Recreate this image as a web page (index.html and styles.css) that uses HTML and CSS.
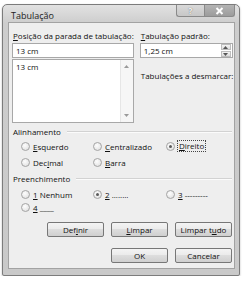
FILE: index.html
```html
<!DOCTYPE html>
<html>
<head>
<meta charset="utf-8">
<link rel="stylesheet" href="styles.css">
</head>
<body>
<div class="window">
  <div class="titlebar">
    <span class="title">Tabulação</span>
    <div class="caps">
      <span class="cap help">?</span>
      <span class="cap close"><svg width="9" height="8" viewBox="0 0 9 8"><path d="M1.5 1 L7.5 7 M7.5 1 L1.5 7" stroke="#fff" stroke-width="2"/></svg></span>
    </div>
  </div>
  <div class="client">
    <div class="top">
      <div class="col-left">
        <div class="label"><u>P</u>osição da parada de tabulação:</div>
        <div class="field">13 cm</div>
        <div class="listbox">
          <div class="item">13 cm</div>
          <div class="scroll">
            <svg width="5" height="3" viewBox="0 0 5 3"><path d="M0 3 L2.5 0 L5 3Z" fill="#9a9a9a"/></svg>
            <svg width="5" height="3" viewBox="0 0 5 3"><path d="M0 0 L2.5 3 L5 0Z" fill="#9a9a9a"/></svg>
          </div>
        </div>
      </div>
      <div class="col-right">
        <div class="label"><u>T</u>abulação padrão:</div>
        <div class="field spin">
          <span>1,25 cm</span>
          <div class="spinbtns">
            <span class="sb"><svg width="5" height="3" viewBox="0 0 5 3"><path d="M0 3 L2.5 0 L5 3Z" fill="#555"/></svg></span>
            <span class="sb"><svg width="5" height="3" viewBox="0 0 5 3"><path d="M0 0 L2.5 3 L5 0Z" fill="#555"/></svg></span>
          </div>
        </div>
        <div class="label clear">Tabulações a desmarcar:</div>
      </div>
    </div>

    <div class="group"><span>Alinhamento</span><i class="rule"></i></div>
    <div class="radios align">
      <label class="radio"><span class="dot"></span><span><u>E</u>squerdo</span></label>
      <label class="radio"><span class="dot"></span><span><u>C</u>entralizado</span></label>
      <label class="radio"><span class="dot on"></span><span class="focus"><u>D</u>ireito</span></label>
      <label class="radio"><span class="dot"></span><span>Dec<u>i</u>mal</span></label>
      <label class="radio"><span class="dot"></span><span><u>B</u>arra</span></label>
    </div>

    <div class="group"><span>Preenchimento</span><i class="rule"></i></div>
    <div class="radios fill">
      <label class="radio"><span class="dot"></span><span><u>1</u> Nenhum</span></label>
      <label class="radio"><span class="dot on"></span><span><u>2</u> ........</span></label>
      <label class="radio"><span class="dot"></span><span><u>3</u> ---------</span></label>
      <label class="radio"><span class="dot"></span><span><u>4</u> ____</span></label>
    </div>

    <div class="buttons first">
      <span class="btn">Def<u>i</u>nir</span>
      <span class="btn"><u>L</u>impar</span>
      <span class="btn">Limpar t<u>u</u>do</span>
    </div>
    <div class="buttons">
      <span class="btn">OK</span>
      <span class="btn">Cancelar</span>
    </div>
  </div>
</div>
</body>
</html>
```

FILE: styles.css
```css
html, body {
  margin: 0;
  padding: 0;
  background: #ffffff;
}
body {
  font-family: "Open Sans", "Noto Sans", sans-serif;
  font-size: 8px;
  color: #111;
}
u { text-decoration-thickness: 1px; text-underline-offset: 1px; }

.window {
  margin: 4px 0 0 2px;
  width: 238px;
  height: 272px;
  box-sizing: border-box;
  border: 1px solid #7c7c7c;
  border-radius: 5px 5px 2px 2px;
  background: linear-gradient(#e2e2e2, #cdcdcd 18px, #c9c9c9);
  padding: 0 4px 6px 5px;
  box-shadow: 0 1px 2px rgba(0,0,0,0.3);
}

.titlebar {
  height: 17px;
  display: flex;
  justify-content: space-between;
  align-items: flex-start;
}
.title {
  margin: 5px 0 0 3px;
  font-size: 9px;
  line-height: 11px;
  color: #222;
}
.caps {
  display: flex;
}
.cap {
  height: 12px;
  display: flex;
  align-items: center;
  justify-content: center;
  box-sizing: border-box;
  border: 1px solid #8a8a8a;
  border-top: none;
}
.help {
  width: 28px;
  border-radius: 0 0 0 3px;
  background: linear-gradient(#d9d9d9, #c7c7c7);
  color: #f4f4f4;
  font-weight: bold;
  font-size: 9px;
  text-shadow: 0 0 1px #555;
  border-right: none;
}
.close {
  width: 31px;
  border-radius: 0 0 3px 0;
  background: linear-gradient(#b4b4b4, #9c9c9c);
}

.client {
  height: 247px;
  box-sizing: border-box;
  border: 1px solid #a2a2a2;
  background: #eeeeee;
  padding: 7px 2px 0 3px;
}

.top {
  display: flex;
  gap: 6px;
}
.col-left { width: 122px; }
.col-right { width: 93px; }
.label {
  line-height: 11px;
  padding-left: 1px;
  white-space: nowrap;
}
.field {
  margin-top: 2px;
  height: 15px;
  box-sizing: border-box;
  border: 1px solid #a8a8a8;
  background: #fff;
  padding-left: 3px;
  line-height: 13px;
}
.spin {
  display: flex;
  justify-content: space-between;
}
.spinbtns {
  display: flex;
  flex-direction: column;
  gap: 1px;
  padding: 0 1px 0 0;
}
.sb {
  width: 10px;
  height: 6px;
  box-sizing: border-box;
  border: 1px solid #bdbdbd;
  background: linear-gradient(#f4f4f4, #dcdcdc);
  display: flex;
  align-items: center;
  justify-content: center;
}
.listbox {
  margin-top: 1px;
  height: 64px;
  box-sizing: border-box;
  border: 1px solid #a8a8a8;
  background: #fff;
  display: flex;
  justify-content: space-between;
}
.item {
  padding: 1px 0 0 3px;
  line-height: 11px;
}
.scroll {
  width: 12px;
  border-left: 1px solid #e6e6e6;
  background: #f6f6f6;
  display: flex;
  flex-direction: column;
  justify-content: space-between;
  align-items: center;
  padding: 5px 0 5px;
}
.clear {
  margin-top: 12px;
}

.group {
  display: flex;
  align-items: center;
  margin-top: 3px;
  line-height: 11px;
  padding-left: 1px;
}
.group .rule {
  flex: 1;
  height: 0;
  border-top: 1px solid #d2d2d2;
  border-bottom: 1px solid #fbfbfb;
  margin-left: 6px;
}

.radios {
  display: grid;
  grid-template-columns: 72px 73px auto;
  padding-left: 9px;
}
.align { grid-auto-rows: 16px; margin-top: 1px; }
.fill { grid-auto-rows: 13px; margin-top: 4px; }
.radio {
  display: flex;
  align-items: center;
  gap: 3px;
  white-space: nowrap;
}
.dot {
  width: 9px;
  height: 9px;
  box-sizing: border-box;
  border-radius: 50%;
  border: 1px solid #a4a4a4;
  background: radial-gradient(circle at 40% 35%, #fdfdfd, #dcdcdc);
  position: relative;
}
.dot.on::after {
  content: "";
  position: absolute;
  left: 2px;
  top: 2px;
  width: 3px;
  height: 3px;
  border-radius: 50%;
  background: #5a5a5a;
}
.focus {
  outline: 1px dotted #444;
  padding: 0 1px;
  line-height: 10px;
}

.buttons {
  display: flex;
  justify-content: flex-end;
  gap: 7px;
  margin-top: 11px;
}
.buttons.first { margin-top: 8px; }
.btn {
  width: 57px;
  height: 15px;
  box-sizing: border-box;
  border: 1px solid #777;
  border-radius: 2px;
  background: linear-gradient(#f4f4f4, #ebebeb 45%, #dddddd 50%, #cfcfcf);
  display: flex;
  align-items: center;
  justify-content: center;
  line-height: 11px;
}
```
